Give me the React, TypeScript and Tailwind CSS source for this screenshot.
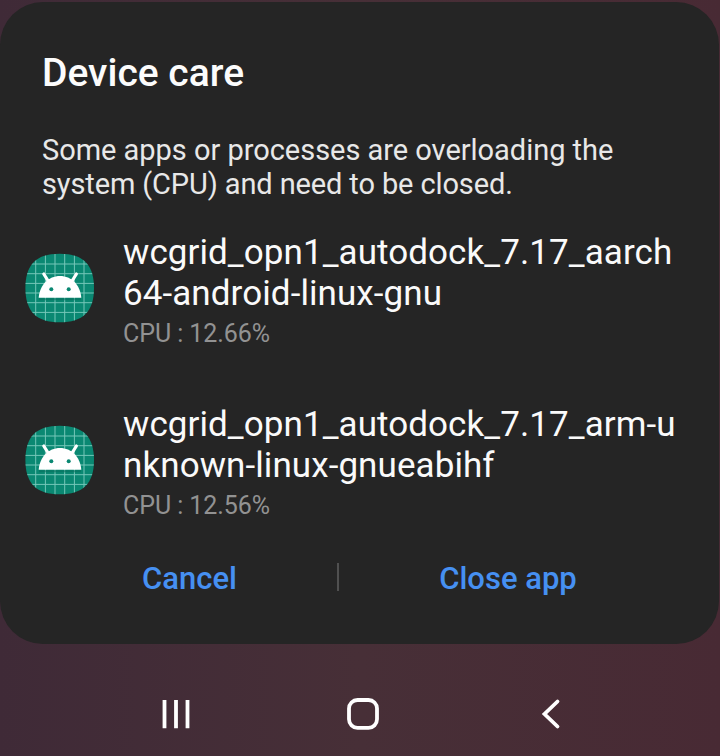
import React from 'react';

function AndroidIcon({ id }: { id: string }) {
  return (
    <svg className="h-[70px] w-[70px] shrink-0" viewBox="0 0 70 70">
      <defs>
        <clipPath id={id}>
          <path d="M34.700 0.700C58 0.700 69 11.500 69 35S58 69.300 34.700 69.300 0.400 58.500 0.400 35 11.400 0.700 34.700 0.700Z" />
        </clipPath>
      </defs>
      <g clipPath={`url(#${id})`}>
        <rect width="70" height="70" fill="#0a8872" />
        <path
          d="M10.700 0V70M20.400 0V70M30 0V70M39.700 0V70M49.400 0V70M59 0V70M0 11H70M0 20.700H70M0 30.400H70M0 40H70M0 49.700H70M0 59.400H70"
          stroke="#74c6b8"
          strokeWidth="1"
        />
        <path d="M14 46.200H56" stroke="#066b59" strokeWidth="2" opacity="0.5" />
        <path d="M18.800 21L23.500 28.500M51.400 21L46.700 28.500" stroke="#fff" strokeWidth="3.200" fill="none" strokeLinecap="round" />
        <path d="M13.700 44.700C14.700 32 23.500 23 35 23S55.300 32 56.300 44.700Z" fill="#fff" />
        <circle cx="26.300" cy="36.200" r="2" fill="#0a8872" />
        <circle cx="43.700" cy="36.200" r="2" fill="#0a8872" />
      </g>
    </svg>
  );
}

function AppRow({ id, lines, cpu }: { id: string; lines: string[]; cpu: string }) {
  return (
    <div className="flex h-[172px] pl-[25px]">
      <div className="pt-[21px]">
        <AndroidIcon id={id} />
      </div>
      <div className="ml-[28px] whitespace-nowrap">
        {lines.map((line) => (
          <div key={line} className="text-[35px] leading-[41px] tracking-[0.08px] text-[#fafafa]">{line}</div>
        ))}
        <div className="mt-[4px] text-[25px] leading-[32px] tracking-[-0.07px] text-[#929292]">{cpu}</div>
      </div>
    </div>
  );
}

export default function App() {
  return (
    <div className="flex h-[756px] w-[720px] flex-col overflow-hidden bg-linear-to-r from-[#3f2a37] via-[#472f37] to-[#482a34] font-['Roboto',sans-serif]">
      <main className="mt-[2px] mr-px h-[642px] rounded-[43px] bg-[#252525]">
        <h1 className="pt-[49px] pl-[42px] text-[39px] leading-[44px] font-medium text-[#fcfcfc]">Device care</h1>
        <p className="mt-[38px] pl-[42px] text-[29px] leading-[34px] whitespace-nowrap text-[#e8e8e8]">
          <span className="tracking-[-0.03px]">Some apps or processes are overloading the</span>
          <br />
          <span className="tracking-[-0.12px]">system (CPU) and need to be closed.</span>
        </p>
        <div className="mt-[31px]">
          <AppRow id="aarch64-icon" lines={['wcgrid_opn1_autodock_7.17_aarch', '64-android-linux-gnu']} cpu="CPU : 12.66%" />
          <AppRow id="arm-icon" lines={['wcgrid_opn1_autodock_7.17_arm-u', 'nknown-linux-gnueabihf']} cpu="CPU : 12.56%" />
        </div>
        <div className="-mt-[17px] flex h-[36px] items-center text-[31px] font-medium text-[#4690f2]">
          <button className="ml-[42px] w-[295px] pt-[4px]">Cancel</button>
          <span className="h-[28px] w-[2px] bg-[#505050]" />
          <button className="w-[338px] pt-[4px]">Close app</button>
        </div>
      </main>
      <nav className="flex flex-1 items-center">
        <svg width="720" height="112" viewBox="0 644 720 112" fill="none" stroke="#fff" strokeWidth="3.800">
          <path d="M164.500 700V728.300M176 700V728.300M187.500 700V728.300" />
          <rect x="349" y="700" width="28" height="27.800" rx="8.500" />
          <path d="M557.500 701.500L544.500 714L557.500 726.500" strokeLinecap="round" />
        </svg>
      </nav>
    </div>
  );
}
